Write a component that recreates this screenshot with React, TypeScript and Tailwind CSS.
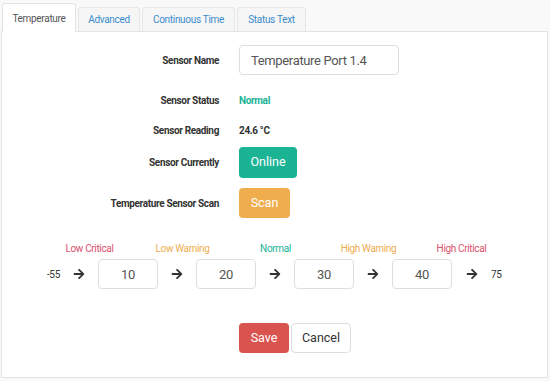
import { FaArrowRight } from "react-icons/fa";

const TABS = [
  { label: "Advanced", w: "w-[62px]" },
  { label: "Continuous Time", w: "w-[93px]" },
  { label: "Status Text", w: "w-[69px]" },
];

const LEVELS = [
  { label: "Low Critical", color: "text-[#d9506c]" },
  { label: "Low Warning", color: "text-[#f0ad4e]" },
  { label: "Normal", color: "text-[#1ab394]" },
  { label: "High Warning", color: "text-[#f0ad4e]" },
  { label: "High Critical", color: "text-[#d9506c]" },
];

const VALUES = ["10", "20", "30", "40"];

function Row({ label, className, children }: { label: string; className: string; children: React.ReactNode }) {
  return (
    <div className={`flex items-center ${className}`}>
      <div className="w-[217px] text-right text-[10px] tracking-[-0.35px] font-bold text-[#333]">{label}</div>
      <div className="ml-[20px] flex items-center">{children}</div>
    </div>
  );
}

function Arrow({ w = "w-[38px]" }: { w?: string }) {
  return (
    <div className={`${w} flex justify-center text-[#333]`}>
      <FaArrowRight size={12} />
    </div>
  );
}

export default function App() {
  return (
    <div className="w-[550px] h-[381px] bg-[#f9f9f9] pt-[3px] pl-[1px] font-['Roboto',sans-serif]">
      <div className="relative z-10 flex items-end gap-[2px] pl-[1px] h-[28px]">
        <div className="w-[74px] h-[29px] -mb-px bg-white border border-b-0 border-[#e3e3e3] rounded-t-[3px] flex items-center justify-center text-[10px] tracking-[-0.3px] text-[#555]">
          Temperature
        </div>
        {TABS.map((t) => (
          <div
            key={t.label}
            className={`${t.w} h-[24px] bg-[#f6f6f6] border border-b-0 border-[#e6e6e6] rounded-t-[3px] flex items-center justify-center text-[10px] tracking-[-0.3px] text-[#3a8ccb]`}
          >
            {t.label}
          </div>
        ))}
      </div>

      <div className="w-[547px] h-[347px] bg-white border border-[#e3e3e3] pt-[13px]">
        <Row label="Sensor Name" className="h-[30px]">
          <input
            readOnly
            value="Temperature Port 1.4"
            className="w-[160px] h-[30px] border border-[#dedede] rounded-[4px] px-[11px] text-[13px] tracking-[-0.35px] text-[#555] outline-none"
          />
        </Row>
        <Row label="Sensor Status" className="h-[30px] mt-[10px]">
          <span className="text-[10px] tracking-[-0.35px] font-bold text-[#1ab394]">Normal</span>
        </Row>
        <Row label="Sensor Reading" className="h-[30px]">
          <span className="text-[10px] tracking-[-0.35px] font-bold text-[#333]">24.6 °C</span>
        </Row>
        <Row label="Sensor Currently" className="h-[31px] mt-[2px]">
          <button className="w-[58px] h-[31px] rounded-[4px] bg-[#1ab394] text-white text-[12.5px]">Online</button>
        </Row>
        <Row label="Temperature Sensor Scan" className="h-[30px] mt-[10px]">
          <button className="w-[51px] h-[30px] rounded-[4px] bg-[#f0ad4e] text-white text-[12.5px]">Scan</button>
        </Row>

        <div className="flex pl-[41px] mt-[22px] h-[16px] items-center">
          {LEVELS.map((l) => (
            <div key={l.label} className={`w-[93px] text-center text-[10px] tracking-[-0.35px] ${l.color}`}>
              {l.label}
            </div>
          ))}
        </div>

        <div className="flex items-center mt-[3px] h-[30px]">
          <div className="w-[58px] text-right text-[10px] tracking-[-0.3px] text-[#333]">-55</div>
          {VALUES.map((v) => (
            <div key={v} className="flex items-center">
              <Arrow />
              <input
                readOnly
                value={v}
                className="w-[60px] h-[30px] border border-[#dedede] rounded-[4px] text-center text-[13px] tracking-[-0.35px] text-[#555] outline-none"
              />
            </div>
          ))}
          <Arrow w="w-[39px]" />
          <div className="text-[10px] tracking-[-0.3px] text-[#333]">75</div>
        </div>

        <div className="flex gap-[2px] pl-[237px] mt-[34px]">
          <button className="w-[50px] h-[30px] rounded-[4px] bg-[#d9534f] text-white text-[12.5px]">Save</button>
          <button className="w-[60px] h-[30px] rounded-[4px] bg-white border border-[#dedede] text-[#333] text-[12.5px]">Cancel</button>
        </div>
      </div>
    </div>
  );
}
